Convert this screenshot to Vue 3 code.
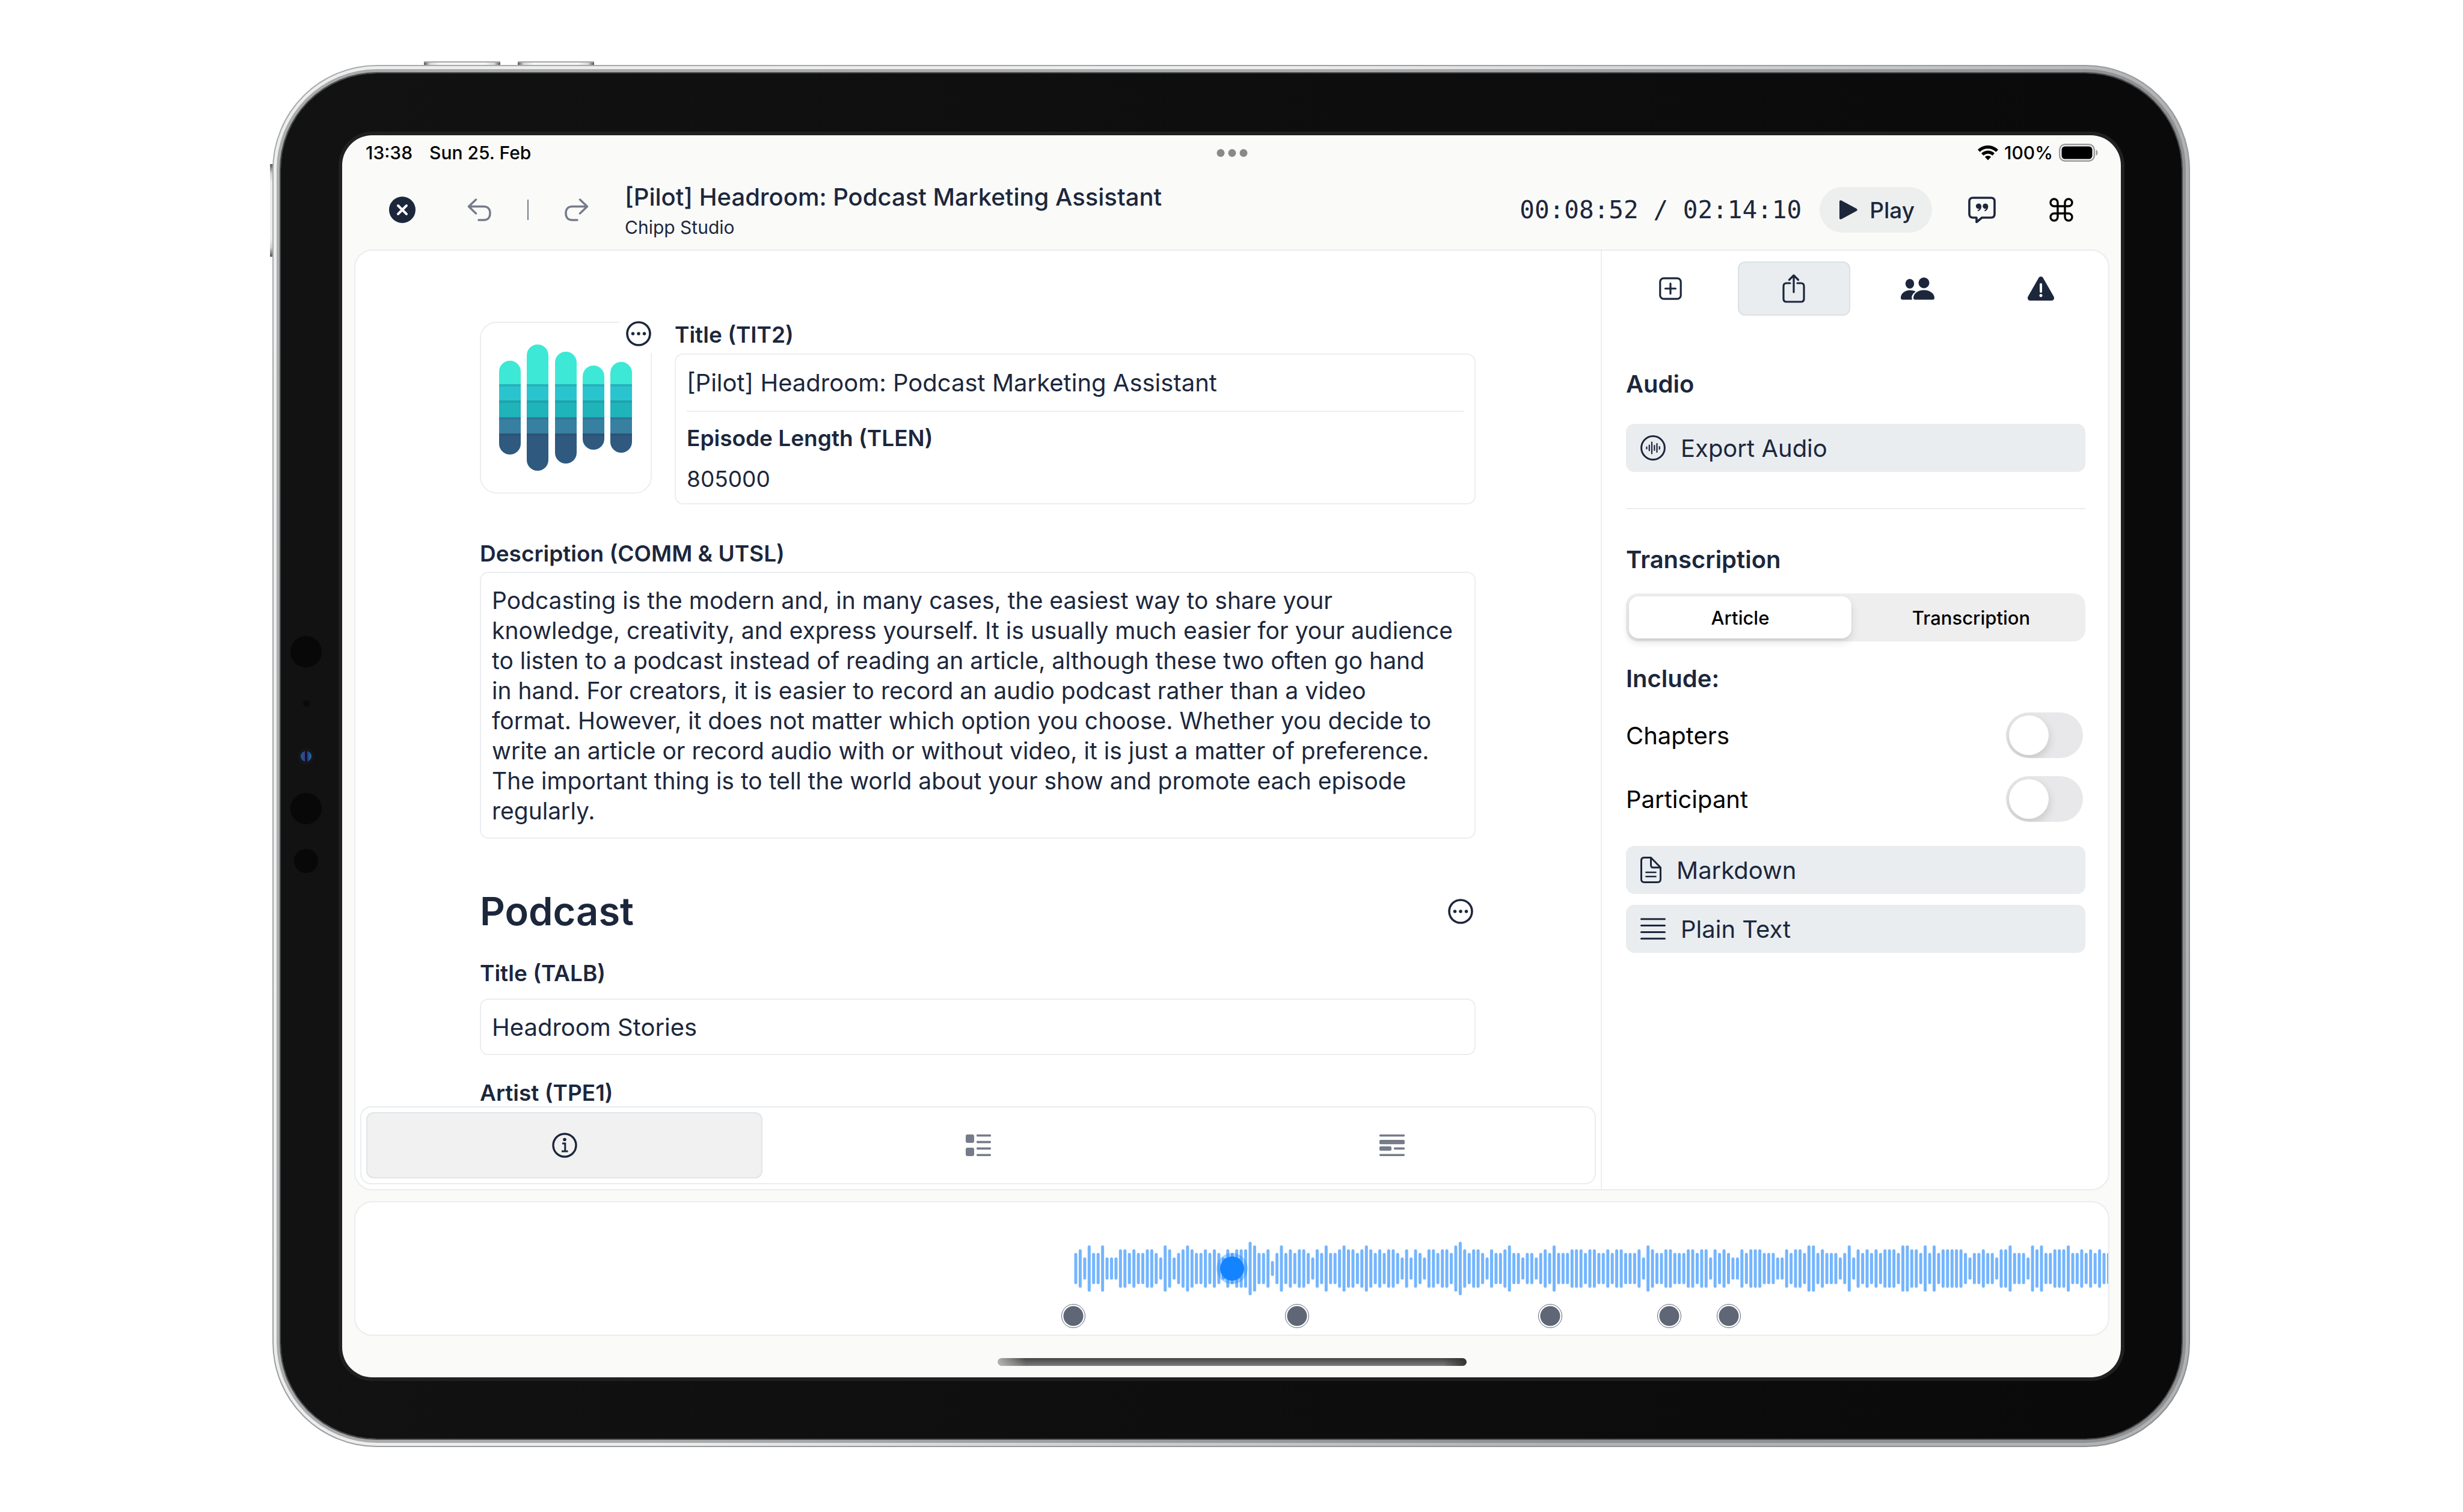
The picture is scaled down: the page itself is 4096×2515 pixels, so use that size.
<script setup>
import { ref } from 'vue'

const title = ref('[Pilot] Headroom: Podcast Marketing Assistant')
const length = ref('805000')
const description = ref(
  [
    'Podcasting is the modern and, in many cases, the easiest way to share your',
    'knowledge, creativity, and express yourself. It is usually much easier for your audience',
    'to listen to a podcast instead of reading an article, although these two often go hand',
    'in hand. For creators, it is easier to record an audio podcast rather than a video',
    'format. However, it does not matter which option you choose. Whether you decide to',
    'write an article or record audio with or without video, it is just a matter of preference.',
    'The important thing is to tell the world about your show and promote each episode',
    'regularly.'
  ].join('\n')
)
const album = ref('Headroom Stories')
const artist = ref('')
const format = ref('article')
const chapters = ref(false)
const participant = ref(false)

// Cover art: rounded bars cut into five colour bands
const coverBars = [
  { x: 32, top: 65, bottom: 221 },
  { x: 78, top: 38, bottom: 248 },
  { x: 125, top: 50, bottom: 236 },
  { x: 171, top: 73, bottom: 213 },
  { x: 217, top: 67, bottom: 218 }
]

// Loudness level (0-5) of each waveform sample
const samples =
  '23142241113323223321431234322323213233354223024232332132422343' +
  '32343232332131321332332453233213223422122123' +
  '24222333233223233222314322332223323313232113233322211323324423222124132' +
  '32323332443324242333332122322133422214342233342232323222'
const barHeights = [25, 37, 52, 64, 77, 89]
const step = 7.435
const wavePath = Array.from(samples)
  .map((level, i) => {
    const h = barHeights[Number(level)] - 5
    const x = (4 + i * step).toFixed(1)
    return `M${x} ${45 - h / 2}v${h}`
  })
  .join('')

const markers = [0, 372, 793, 991, 1090]
</script>

<template>
  <div class="stage">
    <div class="device">
      <span class="key key-top first"></span>
      <span class="key key-top second"></span>
      <span class="key key-side"></span>
      <div class="bezel">
        <div class="sensors">
          <i class="sensor"></i>
          <i class="sensor mic"></i>
          <i class="sensor camera"></i>
          <i class="sensor"></i>
          <i class="sensor light"></i>
        </div>
        <div class="screen">
          <div class="status">
            <span class="clock">13:38</span>
            <span>Sun 25. Feb</span>
            <span class="dots"><i></i><i></i><i></i></span>
            <span class="status-right">
              <svg width="34" height="25" viewBox="0 0 34 25">
                <path d="M17 0C10 0 4.400 2.700 0 7l3.600 3.700C7.200 7.200 11.700 5.200 17 5.200s9.800 2 13.400 5.500L34 7C29.600 2.700 24 0 17 0Z" />
                <path d="M17 8.600c-4.400 0-8.200 1.700-11 4.500l3.600 3.700c1.900-1.900 4.500-3.100 7.400-3.100s5.500 1.200 7.400 3.100l3.600-3.700c-2.800-2.800-6.600-4.500-11-4.500Z" />
                <path d="M17 17c-2 0-3.800.8-5.100 2.100L17 24.500l5.100-5.400C20.800 17.800 19 17 17 17Z" />
              </svg>
              <span>100%</span>
              <svg width="66" height="30" viewBox="0 0 66 30">
                <rect x="1.200" y="1.200" width="57.600" height="27.600" rx="9" fill="none" stroke="#9b9b9b" stroke-width="2.400" />
                <rect x="4.500" y="4.500" width="51" height="21" rx="5.500" />
                <path d="M61.500 10c4 1.500 4 8.500 0 10Z" fill="#9b9b9b" />
              </svg>
            </span>
          </div>

          <header class="toolbar">
            <button class="icon-btn close" aria-label="Close">
              <svg width="44" height="44" viewBox="0 0 44 44">
                <circle cx="22" cy="22" r="22" fill="#1c273c" />
                <path d="M15 15l14 14M29 15L15 29" stroke="#fff" stroke-width="4" stroke-linecap="round" />
              </svg>
            </button>
            <button class="icon-btn" aria-label="Undo">
              <svg width="40" height="38" viewBox="0 0 40 38" class="arrow">
                <path d="M14.500 2L2.500 13.500l12 11.500M3 13.500h24.500C34.500 13.500 38 18 38 24.700S34.500 36 27.500 36H19" />
              </svg>
            </button>
            <span class="bar"></span>
            <button class="icon-btn" aria-label="Redo">
              <svg width="40" height="38" viewBox="0 0 40 38" class="arrow">
                <path d="M25.500 2l12 11.500-12 11.500M37 13.500H12.500C5.500 13.500 2 18 2 24.700S5.500 36 12.500 36H21" />
              </svg>
            </button>
            <div class="heading">
              <h1>[Pilot] Headroom: Podcast Marketing Assistant</h1>
              <p>Chipp Studio</p>
            </div>
            <time class="time">00:08:52 / 02:14:10</time>
            <button class="play">
              <svg width="30" height="32" viewBox="0 0 30 32"><path d="M0 2.500C0 .5 1.500-.4 3.300.6l25 13.400c1.900 1 1.900 3 0 4l-25 13.400C1.500 32.400 0 31.500 0 29.500Z" fill="#1c273c" /></svg>
              Play
            </button>
            <button class="icon-btn quote" aria-label="Comments">
              <svg width="46" height="44" viewBox="0 0 46 44">
                <path d="M8 2h30c4 0 6 2 6 6v21c0 4-2 6-6 6H23l-9 7.500V35H8c-4 0-6-2-6-6V8c0-4 2-6 6-6Z" fill="none" stroke="#1c273c" stroke-width="3.600" stroke-linejoin="round" />
                <path d="M17.300 11.500a4.400 4.400 0 1 0 1.300 8.600c-.4 1.300-1.500 2.300-2.900 2.800l.6 1.600c3.500-1 5.800-4 5.800-8.200 0-3-2-4.800-4.800-4.800ZM28.600 11.500a4.400 4.400 0 1 0 1.300 8.600c-.4 1.300-1.500 2.300-2.900 2.800l.6 1.600c3.500-1 5.800-4 5.800-8.200 0-3-2-4.800-4.800-4.800Z" fill="#1c273c" />
              </svg>
            </button>
            <button class="icon-btn" aria-label="Shortcuts">
              <svg width="40" height="40" viewBox="2 2 20 20">
                <path d="M15 6v12a3 3 0 1 0 3-3H6a3 3 0 1 0 3 3V6a3 3 0 1 0-3 3h12a3 3 0 1 0-3-3" fill="none" stroke="#000" stroke-width="1.700" />
              </svg>
            </button>
          </header>

          <main class="card main">
            <section class="editor">
              <div class="form">
                <div class="hero">
                  <div class="cover">
                    <svg viewBox="0 0 282 282">
                      <defs>
                        <clipPath id="bars">
                          <rect v-for="b in coverBars" :key="b.x" :x="b.x - 2" :y="b.top - 2" width="36" :height="b.bottom - b.top" rx="18" />
                        </clipPath>
                      </defs>
                      <g clip-path="url(#bars)">
                        <rect width="282" height="102" fill="#3de9d6" />
                        <rect y="102" width="282" height="28" fill="#2ac4cf" />
                        <rect y="129" width="282" height="28" fill="#1fb3ba" />
                        <rect y="157" width="282" height="28" fill="#3880a2" />
                        <rect y="184" width="282" height="98" fill="#2f597e" />
                        <rect y="102" width="282" height="4" fill="#26b3ba" />
                        <rect y="129" width="282" height="4" fill="#1da4a9" />
                        <rect y="157" width="282" height="4" fill="#337796" />
                        <rect y="184" width="282" height="4" fill="#2d5377" />
                      </g>
                    </svg>
                    <button class="icon-btn more-badge" aria-label="Cover options">
                      <svg width="42" height="42" viewBox="0 0 42 42" class="more">
                        <circle cx="21" cy="21" r="19" />
                        <path d="M11.500 21h.01M21 21h.01M30.500 21h.01" />
                      </svg>
                    </button>
                  </div>
                  <div class="hero-fields">
                    <label for="tit2">Title (TIT2)</label>
                    <div class="box group">
                      <input id="tit2" v-model="title" class="ruled" type="text" />
                      <label for="tlen">Episode Length (TLEN)</label>
                      <input id="tlen" v-model="length" class="small" type="text" />
                    </div>
                  </div>
                </div>

                <label class="desc-label" for="comm">Description (COMM &amp; UTSL)</label>
                <textarea id="comm" v-model="description" class="box" rows="8" spellcheck="false"></textarea>

                <div class="section-head">
                  <h2>Podcast</h2>
                  <button class="icon-btn" aria-label="Podcast options">
                    <svg width="42" height="42" viewBox="0 0 42 42" class="more">
                      <circle cx="21" cy="21" r="19" />
                      <path d="M11.500 21h.01M21 21h.01M30.500 21h.01" />
                    </svg>
                  </button>
                </div>
                <label class="row-label" for="talb">Title (TALB)</label>
                <input id="talb" v-model="album" class="box line" type="text" />
                <label class="row-label" for="tpe1">Artist (TPE1)</label>
                <input id="tpe1" v-model="artist" class="box line" type="text" />
              </div>

              <nav class="tabs">
                <button class="tab active" aria-label="Info">
                  <svg width="42" height="42" viewBox="0 0 42 42" fill="none" stroke="#1c273c" stroke-width="3.400">
                    <circle cx="21" cy="21" r="19" />
                    <path d="M17 18h4.800v12.500M16 31h10.500" stroke-width="3" />
                    <circle cx="21" cy="11.500" r="2.800" fill="#1c273c" stroke="none" />
                  </svg>
                </button>
                <button class="tab" aria-label="Chapters">
                  <svg width="42" height="36" viewBox="0 0 42 36" fill="#757b89">
                    <rect width="14" height="14" rx="3" />
                    <rect y="22" width="14" height="14" rx="3" />
                    <rect x="18" width="24" height="3.600" rx="1.400" />
                    <rect x="18" y="10.800" width="24" height="3.600" rx="1.400" />
                    <rect x="18" y="21.600" width="24" height="3.600" rx="1.400" />
                    <rect x="18" y="32.400" width="24" height="3.600" rx="1.400" />
                  </svg>
                </button>
                <button class="tab" aria-label="Transcript">
                  <svg width="42" height="36" viewBox="0 0 42 36" fill="#757b89">
                    <rect width="42" height="3.600" rx="1.400" />
                    <rect y="9" width="42" height="7.200" rx="2" />
                    <rect y="19.800" width="20" height="7.200" rx="2" />
                    <rect x="24" y="21.600" width="18" height="3.600" rx="1.400" />
                    <rect y="32.400" width="42" height="3.600" rx="1.400" />
                  </svg>
                </button>
              </nav>
            </section>

            <aside class="sidebar">
              <nav class="side-tabs">
                <button class="side-tab" aria-label="Add">
                  <svg width="38" height="38" viewBox="0 0 38 38" class="line-icon">
                    <rect x="1.800" y="1.800" width="34.400" height="34.400" rx="6" />
                    <path d="M19 10.500v17M10.500 19h17" />
                  </svg>
                </button>
                <button class="side-tab active" aria-label="Export">
                  <svg width="38" height="48" viewBox="0 0 38 48" class="line-icon">
                    <path d="M13 15H7c-3.500 0-5 1.500-5 5v21c0 3.500 1.500 5 5 5h24c3.500 0 5-1.500 5-5V20c0-3.500-1.500-5-5-5h-6M19 2.500V30M11.500 9.500L19 2l7.500 7.500" />
                  </svg>
                </button>
                <button class="side-tab" aria-label="Participants">
                  <svg width="56" height="38" viewBox="0 0 56 38" fill="#1c273c">
                    <circle cx="38.500" cy="9.500" r="9" />
                    <ellipse cx="15" cy="11" rx="7.200" ry="8" />
                    <path d="M21 34.500c0-7 7.500-13 17.500-13S56 27.500 56 34.500c0 2.200-1 3-3 3H24c-2 0-3-.8-3-3Z" />
                    <path d="M25 24c-3 -1.500-6.300-2.300-9.700-2.300C6.500 21.700 0 27.500 0 34c0 2.300.9 3.500 2.600 3.500h16.600c-.7-1-1-2-1-3.300 0-3.800 2.400-7.600 6.800-10.200Z" />
                  </svg>
                </button>
                <button class="side-tab" aria-label="Warnings">
                  <svg width="44" height="40" viewBox="0 0 44 40">
                    <path d="M18.300 2.300c1.600-3 5.800-3 7.400 0l17.700 31c1.700 3.200-.2 6.700-3.700 6.700H4.300c-3.500 0-5.400-3.500-3.700-6.700Z" fill="#1c273c" />
                    <path d="M22 13v12" stroke="#fff" stroke-width="4" stroke-linecap="round" />
                    <circle cx="22" cy="31.500" r="2.500" fill="#fff" />
                  </svg>
                </button>
              </nav>

              <div class="side-body">
                <h3>Audio</h3>
                <button class="action first-action">
                  <svg width="42" height="42" viewBox="0 0 42 42" fill="none" stroke="#1c273c" stroke-linecap="round">
                    <circle cx="21" cy="21" r="19.400" stroke-width="3" />
                    <path d="M10.500 19.500v3M14.800 16.500v9M19 11.500v19M23.300 17v8M27.500 14v14M31.700 19v4" stroke-width="2.200" />
                  </svg>
                  Export Audio
                </button>
                <hr />
                <h3>Transcription</h3>
                <div class="segmented" role="radiogroup" aria-label="Format">
                  <label><input v-model="format" type="radio" name="format" value="article" /><span>Article</span></label>
                  <label><input v-model="format" type="radio" name="format" value="transcription" /><span>Transcription</span></label>
                </div>
                <h3 class="include">Include:</h3>
                <div class="toggles">
                  <label class="toggle">Chapters<input v-model="chapters" type="checkbox" /></label>
                  <label class="toggle">Participant<input v-model="participant" type="checkbox" /></label>
                </div>
                <div class="exports">
                  <button class="action">
                    <svg width="35" height="44" viewBox="0 0 35 44" fill="none" stroke="#1c273c" stroke-width="3" stroke-linejoin="round" stroke-linecap="round">
                      <path d="M6 1.500h11.500L33.500 18v19.500c0 3.500-1.500 5-5 5H6.500c-3.500 0-5-1.500-5-5v-31c0-3.500 1.500-5 4.500-5Z" />
                      <path d="M17.500 2v12c0 3 1 4 4 4h11.500" />
                      <path d="M9.500 26h16M9.500 33h16" stroke-width="2.600" />
                    </svg>
                    Markdown
                  </button>
                  <button class="action">
                    <svg width="42" height="36" viewBox="0 0 42 36" stroke="#1c273c" stroke-width="3" stroke-linecap="round">
                      <path d="M1.500 1.800h39M1.500 12.600h39M1.500 23.400h39M1.500 34.200h39" />
                    </svg>
                    Plain Text
                  </button>
                </div>
              </div>
            </aside>
          </main>

          <section class="card timeline">
            <div class="track">
              <svg class="wave" width="1727" height="90" viewBox="0 0 1727 90">
                <path :d="wavePath" />
              </svg>
              <i v-for="m in markers" :key="m" class="marker" :style="{ left: m + 'px' }"></i>
            </div>
            <i class="playhead"></i>
          </section>

          <footer class="home"><i></i></footer>
        </div>
      </div>
    </div>
  </div>
</template>

<style>
body {
  margin: 0;
  background: #fff;
}
</style>

<style scoped>
* {
  box-sizing: border-box;
}
.stage {
  position: relative;
  isolation: isolate;
  min-height: 100vh;
  display: flex;
  flex-direction: column;
  padding: 108px 454px 108px 453px;
  color: #1c273c;
  font-family: Inter, "Liberation Sans", sans-serif;
}
.device {
  position: relative;
  flex: 1;
  display: flex;
  padding: 14px;
  border-radius: 174px;
  background: linear-gradient(135deg, #a9abac, #8b8d8e);
}
/* bright outer band and darker inner band of the metal frame */
.device::before,
.device::after {
  content: "";
  position: absolute;
}
.device::before {
  inset: 2px;
  border-radius: 172px;
  background: linear-gradient(115deg, #ededee 40%, #b0b2b3 75%);
}
.device::after {
  inset: 7px;
  border-radius: 167px;
  background: linear-gradient(115deg, #a9abac 40%, #8e9091 75%);
}
.key {
  position: absolute;
  z-index: -1;
}
.key-top {
  top: -6px;
  width: 127px;
  height: 10px;
  border-top: 2px solid #a3a5a5;
  background: linear-gradient(90deg, #555, #d8d8d8 8%, #f4f4f4 20%, #f4f4f4 80%, #d8d8d8 92%, #555);
}
.first {
  left: 252px;
}
.second {
  left: 408px;
}
.key-side {
  left: -4px;
  top: 165px;
  width: 8px;
  height: 154px;
  background: linear-gradient(#555, #d0d0d0 10%, #eee 20%, #eee 80%, #d0d0d0 90%, #555);
}
.bezel {
  position: relative;
  z-index: 1;
  flex: 1;
  display: flex;
  min-width: 0;
  padding: 103px 101px 102px 102px;
  border-radius: 160px;
  background: linear-gradient(90deg, #121212, #0a0a0a);
  box-shadow: 0 0 0 2px #4a4b4c;
}
.sensors {
  position: absolute;
  left: 16px;
  top: 0;
  bottom: 0;
  display: grid;
  grid-auto-rows: 87px;
  align-content: center;
  place-items: center;
  width: 52px;
}
.sensor {
  width: 52px;
  height: 52px;
  border-radius: 50%;
  background: #080808;
}
.sensor.light {
  width: 40px;
  height: 40px;
}
.sensor.mic {
  width: 11px;
  height: 11px;
  background: #0a0a0a;
}
.sensor.camera {
  width: 28px;
  height: 28px;
  border: 5px solid #15161a;
  background: linear-gradient(90deg, #1d5c8c 10%, #3b3a82 40%, #07080e 44%, #07080e 54%, #28276b 58%, #1c6fa5 90%);
}
.screen {
  flex: 1;
  min-width: 0;
  display: flex;
  flex-direction: column;
  padding: 0 19px 0 20px;
  border-radius: 50px;
  background: #fafaf8;
  box-shadow: 0 0 0 6px #202020;
}

.status {
  position: relative;
  height: 58px;
  padding: 0 18px 0 19px;
  display: flex;
  align-items: center;
  gap: 28px;
  font-size: 30px;
  font-weight: 500;
  color: #000;
}
.dots {
  position: absolute;
  left: 50%;
  top: 23px;
  display: flex;
  gap: 6px;
  transform: translateX(-50%);
}
.dots i {
  width: 13px;
  height: 13px;
  border-radius: 50%;
  background: #898989;
}
.status-right {
  margin-left: auto;
  display: flex;
  align-items: center;
  gap: 10px;
}

button {
  font: inherit;
  color: inherit;
  border: 0;
  padding: 0;
  cursor: pointer;
}
svg {
  display: block;
  flex: none;
}
.icon-btn {
  flex: none;
  background: none;
}
.toolbar {
  height: 132px;
  padding: 0 60px 0 58px;
  display: flex;
  align-items: center;
  gap: 60px;
}
.close {
  margin-right: 26px;
}
.arrow {
  fill: none;
  stroke: #757c8b;
  stroke-width: 3.5;
  stroke-linecap: round;
  stroke-linejoin: round;
}
.bar {
  width: 2px;
  height: 34px;
  background: #757c8b;
}
h1,
h2,
h3,
p {
  margin: 0;
}
.heading {
  flex: 1;
  display: grid;
  gap: 8px;
  white-space: nowrap;
}
h1 {
  font-size: 40px;
  line-height: 50px;
  font-weight: 500;
}
.heading p {
  font-size: 30px;
  line-height: 34px;
}
.time {
  margin-right: -30px;
  font-family: "DejaVu Sans Mono", monospace;
  font-size: 41px;
}
.play {
  display: flex;
  align-items: center;
  gap: 20px;
  height: 76px;
  padding: 0 29px 0 33px;
  border-radius: 38px;
  background: #edefee;
  font-size: 37px;
  font-weight: 500;
}
.quote {
  margin-right: 29px;
}

.card {
  border: 2px solid #e9edef;
  border-radius: 30px;
  background: #fff;
}
.main {
  flex: 1;
  display: flex;
  overflow: hidden;
}
.editor {
  flex: 1;
  min-width: 0;
  display: flex;
  flex-direction: column;
}
.form {
  flex: 1 1 0;
  min-height: 0;
  overflow: hidden;
  display: flex;
  flex-direction: column;
  padding: 118px 208px 0 207px;
}
.form > * {
  flex: none;
}
.form label {
  display: block;
  font-size: 37px;
  line-height: 44px;
  font-weight: 600;
}
.hero {
  display: flex;
  align-items: flex-start;
  gap: 38px;
}
.cover {
  position: relative;
  flex: none;
  width: 286px;
  height: 286px;
  border: 2px solid #ebeef0;
  border-radius: 28px;
}
.more-badge {
  position: absolute;
  top: -14px;
  right: -12px;
  padding: 11px;
  background: #fff;
}
.more {
  fill: none;
  stroke: #1c273c;
  stroke-width: 3.6;
}
.more path {
  stroke-width: 5.5;
  stroke-linecap: round;
}
.hero-fields {
  flex: 1;
  min-width: 0;
}
.box {
  border: 2px solid #ebeef0;
  border-radius: 14px;
  background: #fff;
}
.group {
  margin-top: 9px;
  padding: 0 18px 19px;
}
input,
textarea {
  display: block;
  width: 100%;
  margin: 0;
  font: inherit;
  color: inherit;
  font-size: 40px;
  outline: 0;
}
.ruled {
  height: 95px;
  margin-bottom: 22px;
  padding: 0;
  border: 0;
  border-bottom: 2px solid #e9edf0;
}
.small {
  height: 44px;
  margin-top: 23px;
  padding: 0;
  border: 0;
  font-size: 37px;
}
.desc-label {
  margin: 60px 0 8px;
}
textarea {
  height: 444px;
  padding: 21px 0 0 18px;
  font-size: 39px;
  line-height: 50px;
  white-space: pre;
  resize: none;
  overflow: hidden;
}
.section-head {
  display: flex;
  align-items: center;
  justify-content: space-between;
  margin-top: 81px;
  padding-right: 4px;
}
h2 {
  font-size: 65px;
  line-height: 80px;
  font-weight: 600;
}
.row-label {
  margin: 41px 0 0;
}
.line {
  height: 94px;
  margin-top: 20px;
  padding: 0 18px;
}
.tabs {
  display: flex;
  gap: 29px;
  height: 130px;
  margin: 0 8px 8px;
  padding: 8px;
  border: 2px solid #e9edf0;
  border-radius: 18px;
}
.tab,
.side-tab {
  flex: 1;
  display: grid;
  place-items: center;
  border: 2px solid transparent;
  border-radius: 12px;
  background: none;
}
.tab.active {
  background: #f1f1f1;
  border-color: #e1e5e7;
}

.sidebar {
  width: 844px;
  border-left: 2px solid #ebeef0;
}
.side-tabs {
  display: flex;
  gap: 18px;
  padding: 18px 18px 0 20px;
}
.side-tab {
  height: 90px;
}
.side-tab.active {
  background: #e9edf0;
  border-color: #dae1e4;
}
.line-icon {
  fill: none;
  stroke: #1c273c;
  stroke-width: 3.2;
  stroke-linecap: round;
  stroke-linejoin: round;
}
.side-body {
  padding: 90px 38px 0 40px;
}
h3 {
  font-size: 40px;
  line-height: 48px;
  font-weight: 600;
}
.action {
  display: flex;
  align-items: center;
  gap: 25px;
  width: 100%;
  height: 80px;
  padding: 0 24px;
  border-radius: 14px;
  background: #e9edf0;
  font-size: 40px;
}
.first-action {
  margin-top: 42px;
}
hr {
  height: 2px;
  margin: 60px 0;
  border: 0;
  background: #e9edf0;
}
.segmented {
  display: flex;
  gap: 14px;
  height: 80px;
  margin-top: 32px;
  padding: 5px;
  border-radius: 20px;
  background: #eee;
}
.segmented label {
  position: relative;
  flex: 1;
  display: grid;
  place-items: center;
  font-size: 31px;
  font-weight: 500;
  color: #000;
}
.segmented input {
  appearance: none;
  position: absolute;
  inset: 0;
  border-radius: 16px;
}
.segmented span {
  position: relative;
}
.segmented input:checked {
  background: #fff;
  box-shadow: 0 6px 14px rgba(0, 0, 0, 0.12), 0 2px 3px rgba(0, 0, 0, 0.06);
}
.include {
  margin-top: 38px;
}
.toggles {
  display: grid;
  gap: 30px;
  margin: 32px 4px 40px 0;
}
.toggle {
  display: flex;
  align-items: center;
  justify-content: space-between;
  font-size: 40px;
  color: #000;
}
.toggle input {
  appearance: none;
  display: flex;
  width: 128px;
  height: 76px;
  padding: 5px;
  border-radius: 38px;
  background: #e8e8ea;
  overflow: hidden;
}
.toggle input::before {
  content: "";
  width: 66px;
  height: 66px;
  border-radius: 50%;
  background: #fff;
  box-shadow: 0 6px 16px rgba(0, 0, 0, 0.16);
}
.toggle input:checked {
  justify-content: flex-end;
  background: #34c759;
}
.exports {
  display: grid;
  gap: 18px;
}

.timeline {
  position: relative;
  height: 224px;
  margin-top: 18px;
  padding: 65px 0 0 calc(50% - 266px);
  overflow: hidden;
}
.track {
  position: relative;
}
.wave {
  fill: none;
  stroke: #74b5ff;
  stroke-width: 5;
  stroke-linecap: round;
}
.playhead {
  position: absolute;
  left: 50%;
  top: 90px;
  width: 40px;
  height: 40px;
  margin-left: -20px;
  border-radius: 50%;
  background: #1483ff;
  box-shadow: 0 0 0 6px rgba(20, 131, 255, 0.35);
}
.marker {
  position: absolute;
  top: 104px;
  width: 40px;
  height: 40px;
  margin-left: -20px;
  border: 1px solid #5f6675;
  border-radius: 50%;
  background: radial-gradient(circle, #5f6675 16px, #fff 17px);
}
.home {
  height: 69px;
  display: flex;
  justify-content: center;
  padding-top: 37px;
}
.home i {
  width: 780px;
  height: 13px;
  border-radius: 7px;
  background:
    linear-gradient(90deg, rgba(200, 200, 198, 0.8), transparent 6%, transparent 95%, #333),
    linear-gradient(#444, #7c7c7c);
}
</style>
